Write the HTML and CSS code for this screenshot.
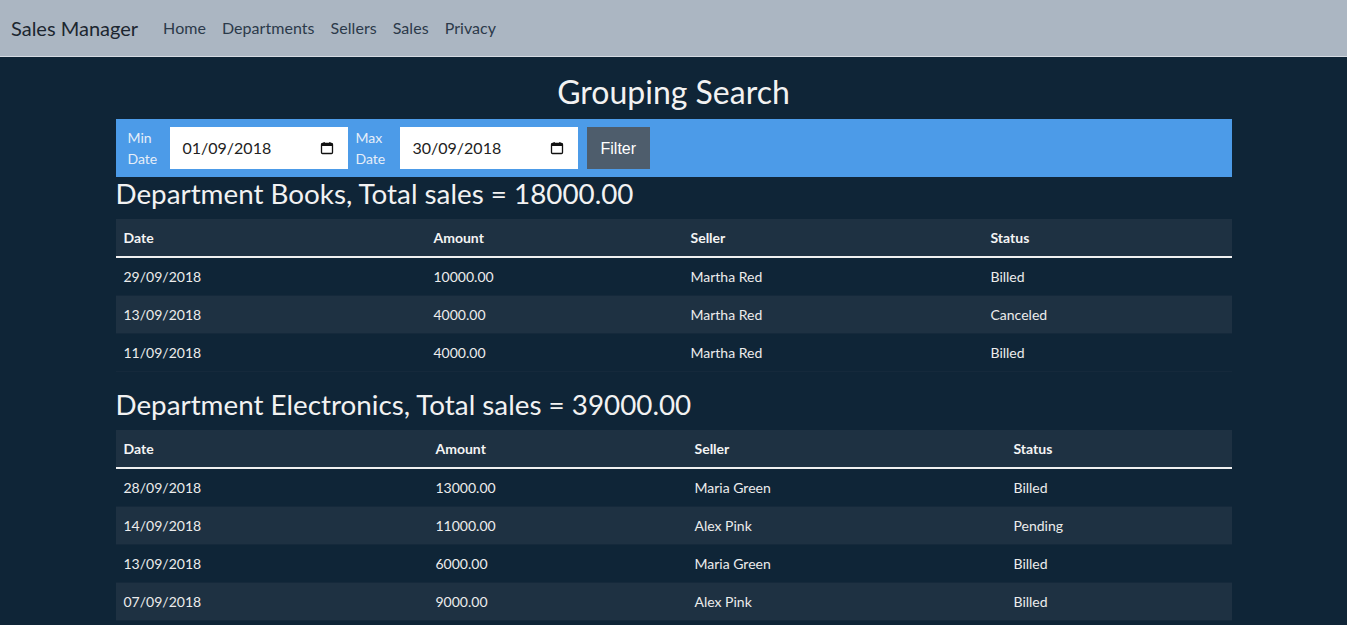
FILE: index.html
```html
<!DOCTYPE html>
<html lang="en">
<head>
<meta charset="utf-8">
<title>Grouping Search - Sales Manager</title>
<link rel="stylesheet" href="styles.css">
</head>
<body>
<header class="navbar">
  <a class="brand" href="#">Sales Manager</a>
  <nav class="nav">
    <a href="#">Home</a>
    <a href="#">Departments</a>
    <a href="#">Sellers</a>
    <a href="#">Sales</a>
    <a href="#">Privacy</a>
  </nav>
</header>
<main class="container">
  <h1 class="page-title">Grouping Search</h1>
  <form class="filter-bar">
    <label class="filter-label">Min<br>Date</label>
    <div class="date-field">
      <span class="date-value">01/09/2018</span>
      <svg class="cal" width="14" height="14" viewBox="0 0 14 14" aria-hidden="true"><rect x="1.5" y="2.5" width="11" height="10" rx="1" fill="none" stroke="#111" stroke-width="1.3"/><rect x="1.5" y="2.5" width="11" height="2.5" fill="#111"/><rect x="3.5" y="1" width="1.2" height="2" fill="#111"/><rect x="9.3" y="1" width="1.2" height="2" fill="#111"/></svg>
    </div>
    <label class="filter-label max">Max<br>Date</label>
    <div class="date-field">
      <span class="date-value">30/09/2018</span>
      <svg class="cal" width="14" height="14" viewBox="0 0 14 14" aria-hidden="true"><rect x="1.5" y="2.5" width="11" height="10" rx="1" fill="none" stroke="#111" stroke-width="1.3"/><rect x="1.5" y="2.5" width="11" height="2.5" fill="#111"/><rect x="3.5" y="1" width="1.2" height="2" fill="#111"/><rect x="9.3" y="1" width="1.2" height="2" fill="#111"/></svg>
    </div>
    <button type="button" class="btn-filter">Filter</button>
  </form>

  <h3 class="dept-title">Department Books, Total sales = 18000.00</h3>
  <table class="sales-table books">
    <colgroup><col class="c1"><col class="c2"><col class="c3"><col class="c4"></colgroup>
    <tbody>
      <tr class="head"><th>Date</th><th>Amount</th><th>Seller</th><th>Status</th></tr>
      <tr><td>29/09/2018</td><td>10000.00</td><td>Martha Red</td><td>Billed</td></tr>
      <tr><td>13/09/2018</td><td>4000.00</td><td>Martha Red</td><td>Canceled</td></tr>
      <tr><td>11/09/2018</td><td>4000.00</td><td>Martha Red</td><td>Billed</td></tr>
    </tbody>
  </table>

  <h3 class="dept-title">Department Electronics, Total sales = 39000.00</h3>
  <table class="sales-table electronics">
    <colgroup><col class="c1"><col class="c2"><col class="c3"><col class="c4"></colgroup>
    <tbody>
      <tr class="head"><th>Date</th><th>Amount</th><th>Seller</th><th>Status</th></tr>
      <tr><td>28/09/2018</td><td>13000.00</td><td>Maria Green</td><td>Billed</td></tr>
      <tr><td>14/09/2018</td><td>11000.00</td><td>Alex Pink</td><td>Pending</td></tr>
      <tr><td>13/09/2018</td><td>6000.00</td><td>Maria Green</td><td>Billed</td></tr>
      <tr><td>07/09/2018</td><td>9000.00</td><td>Alex Pink</td><td>Billed</td></tr>
    </tbody>
  </table>
</main>
</body>
</html>
```

FILE: styles.css
```css
* { box-sizing: border-box; }

body {
  margin: 0;
  background: #0f2537;
  color: #ebebeb;
  font-family: Lato, "Open Sans", "Liberation Sans", sans-serif;
  font-size: 16px;
  line-height: 1.5;
}

.navbar {
  display: flex;
  align-items: center;
  height: 57px;
  padding: 0 11px;
  background: #abb6c2;
  border-bottom: 1px solid #d5dbe2;
}

.brand {
  font-size: 20px;
  color: #1c2630;
  text-decoration: none;
  margin-right: 17px;
}

.nav {
  display: flex;
}

.nav a {
  padding: 8px;
  color: #2b3a4a;
  text-decoration: none;
  font-size: 16px;
  letter-spacing: 0.05px;
}

.container {
  max-width: 1140px;
  margin: 0 auto;
  padding: 0 12px 24px;
}

.page-title {
  margin: 16px 0 8px;
  font-size: 32px;
  font-weight: 400;
  line-height: 1.2;
  text-align: center;
  color: #f2f2f2;
}

.filter-bar {
  display: flex;
  align-items: center;
  background: #4c9be8;
  padding: 8px 8px 8px 12px;
  margin: 0;
}

.filter-label {
  font-size: 14px;
  line-height: 21px;
  color: #e6eef8;
  min-width: 30px;
  margin-right: 12px;
}

.filter-label.max {
  min-width: 32px;
}

.date-field {
  display: flex;
  align-items: center;
  justify-content: space-between;
  width: 178px;
  height: 42px;
  background: #fff;
  padding: 0 14px 0 13px;
  margin-right: 8px;
}

.date-value {
  font-size: 16px;
  color: #222;
}

.cal {
  display: block;
}

.btn-filter {
  height: 42px;
  margin-left: 1px;
  padding: 2px 14px 0;
  border: 0;
  background: #4e5d6c;
  color: #fff;
  font-family: "Liberation Sans", Arial, sans-serif;
  font-size: 16px;
}

.dept-title {
  margin: 0 0 8px;
  font-size: 27.8px;
  font-weight: 400;
  line-height: 33.6px;
  color: #f2f2f2;
}

.sales-table {
  width: 100%;
  table-layout: fixed;
  border-collapse: collapse;
  margin-bottom: 16px;
  font-size: 14px;
  line-height: 21px;
}

.books .c1 { width: 310px; }
.books .c2 { width: 257px; }
.books .c3 { width: 300px; }
.books .c4 { width: 249px; }

.electronics .c1 { width: 312px; }
.electronics .c2 { width: 259px; }
.electronics .c3 { width: 319px; }
.electronics .c4 { width: 226px; }

.sales-table th,
.sales-table td {
  padding: 8px;
  text-align: left;
  border-bottom: 1px solid #15293b;
}

.sales-table th {
  font-weight: 700;
  color: #f4f4f4;
  border-bottom: 2px solid #f0f0f0;
}

.sales-table td {
  color: #ececec;
}

.sales-table tr:nth-child(odd) {
  background: #1e3142;
}

.sales-table tr.head {
  background: #1e3142;
}
```
